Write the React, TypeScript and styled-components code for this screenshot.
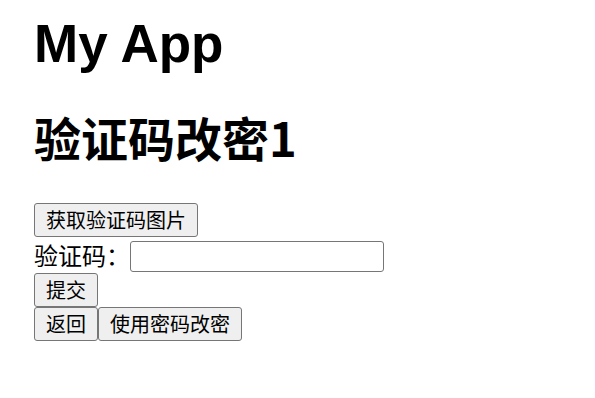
import React from "react";
import styled, { createGlobalStyle } from "styled-components";

const GlobalStyle = createGlobalStyle`
  html, body {
    margin: 0;
    padding: 0;
    background: #ffffff;
    color: #000000;
    font-family: "Liberation Sans", "Noto Sans CJK SC", sans-serif;
  }
`;

const Page = styled.div`
  display: flex;
  flex-direction: column;
  align-items: flex-start;
  padding: 15px 0 0 34px;
`;

const AppTitle = styled.h1`
  margin: 0;
  font-size: 53px;
  line-height: 58px;
  font-weight: bold;
`;

const PageTitle = styled.h1`
  margin: 36px 0 0;
  font-size: 47px;
  line-height: 56px;
  font-weight: bold;
  font-family: "Noto Sans CJK SC", "Liberation Sans", sans-serif;
`;

const Form = styled.div`
  display: flex;
  flex-direction: column;
  align-items: flex-start;
  margin-top: 38px;
`;

const Button = styled.button`
  height: 34px;
  padding: 0 11px;
  margin: 0;
  border: 1px solid #767676;
  border-radius: 3px;
  background: #efefef;
  color: #000000;
  font-family: "Noto Sans CJK SC", sans-serif;
  font-size: 20px;
  line-height: 32px;
  cursor: pointer;
`;

const FieldRow = styled.label`
  display: flex;
  align-items: flex-start;
  height: 36px;
`;

const FieldLabel = styled.span`
  font-family: "Noto Sans CJK SC", sans-serif;
  font-size: 24px;
  line-height: 36px;
`;

const CodeInput = styled.input`
  box-sizing: border-box;
  width: 254px;
  height: 31px;
  margin: 4px 0 0;
  padding: 1px 2px;
  border: 1px solid #767676;
  border-radius: 3px;
  font-size: 20px;
`;

const ButtonGroup = styled.div`
  display: flex;
`;

export default function App() {
  return (
    <>
      <GlobalStyle />
      <Page>
        <AppTitle>My App</AppTitle>
        <PageTitle>验证码改密1</PageTitle>
        <Form>
          <Button>获取验证码图片</Button>
          <FieldRow>
            <FieldLabel>验证码：</FieldLabel>
            <CodeInput type="text" />
          </FieldRow>
          <Button>提交</Button>
          <ButtonGroup>
            <Button>返回</Button>
            <Button>使用密码改密</Button>
          </ButtonGroup>
        </Form>
      </Page>
    </>
  );
}
